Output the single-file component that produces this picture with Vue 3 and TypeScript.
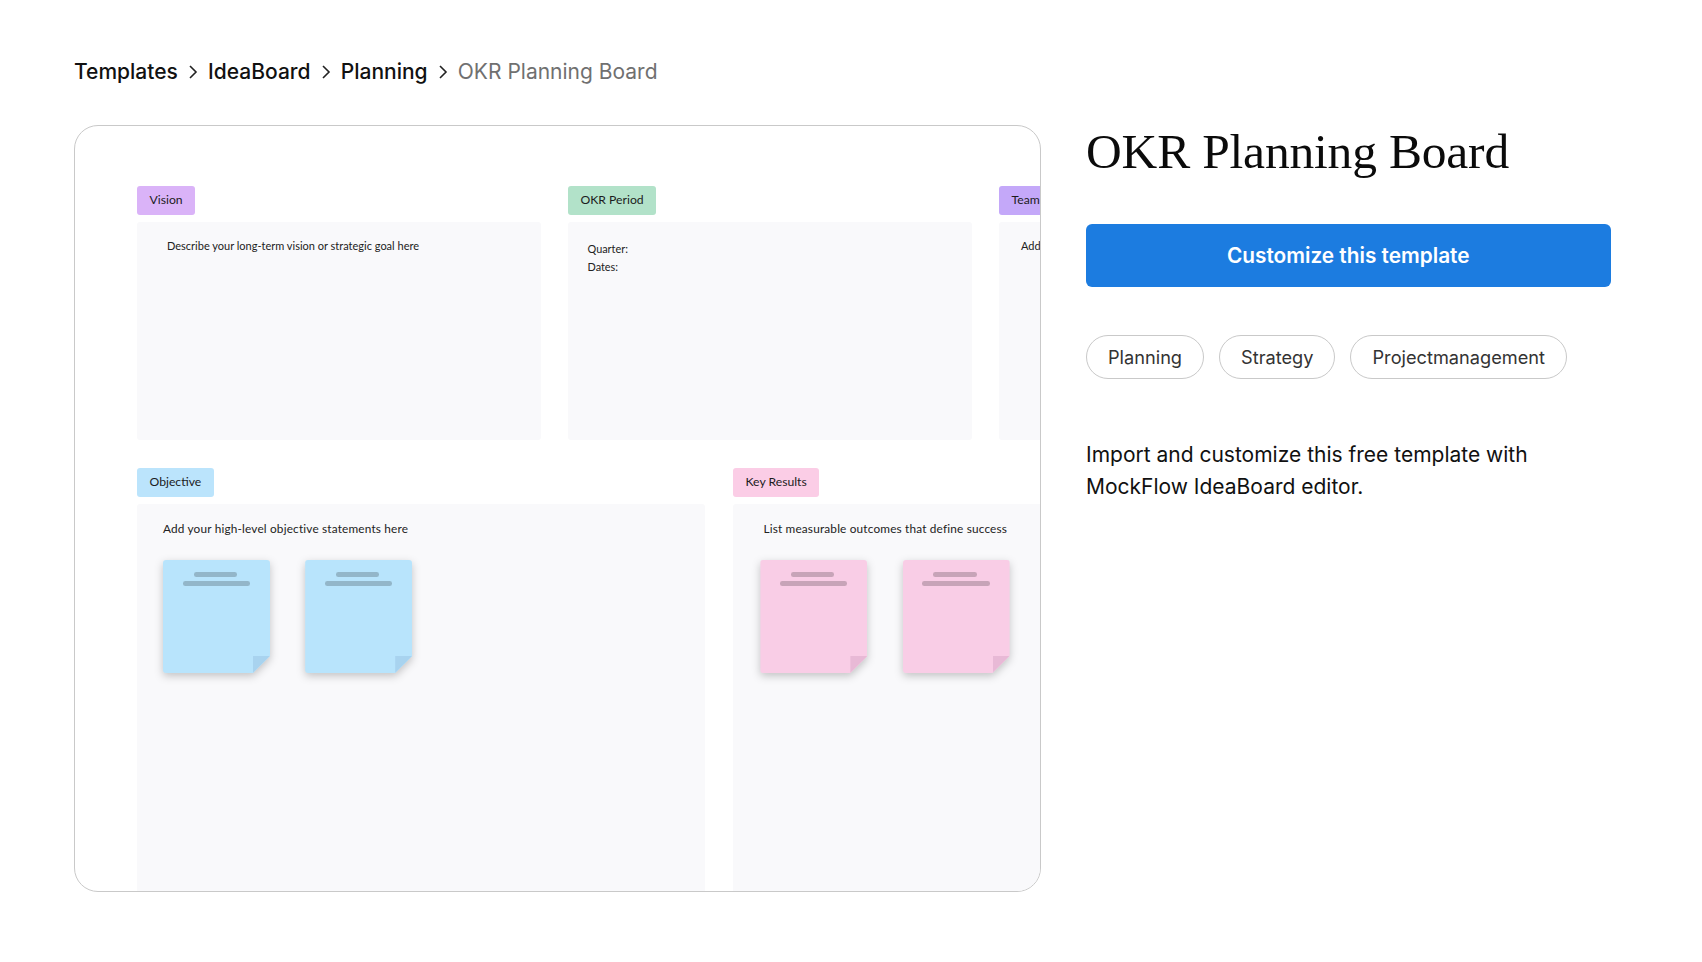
<template>
  <div class="page">
    <nav class="crumbs">
      <template v-for="(c, i) in crumbs" :key="c">
        <span class="crumb" :class="{ current: i === crumbs.length - 1 }">{{ c }}</span>
        <svg v-if="i < crumbs.length - 1" class="chev" viewBox="0 0 10 16" width="10" height="16">
          <path d="M2 2l6 6-6 6" fill="none" stroke="#222" stroke-width="1.6" />
        </svg>
      </template>
    </nav>

    <div class="main">
      <!-- board preview -->
      <div class="preview">
        <div class="board">
          <div class="row top">
            <section v-for="s in topSections" :key="s.label" class="col" :class="s.cls">
              <div class="tag" :style="{ background: s.color }">{{ s.label }}</div>
              <div class="panel">
                <p v-for="t in s.lines" :key="t" class="hint">{{ t }}</p>
              </div>
            </section>
          </div>
          <div class="row bottom">
            <section v-for="s in bottomSections" :key="s.label" class="col" :class="s.cls">
              <div class="tag" :style="{ background: s.color }">{{ s.label }}</div>
              <div class="panel">
                <p class="hint">{{ s.text }}</p>
                <div class="notes">
                  <div v-for="n in 2" :key="n" class="note">
                    <div class="paper">
                      <i class="bar short"></i>
                      <i class="bar long"></i>
                    </div>
                  </div>
                </div>
              </div>
            </section>
          </div>
        </div>
      </div>

      <!-- details -->
      <aside class="side">
        <h1>OKR Planning Board</h1>
        <button class="cta">Customize this template</button>
        <div class="chips">
          <span v-for="c in chips" :key="c" class="chip">{{ c }}</span>
        </div>
        <p class="desc">Import and customize this free template with MockFlow IdeaBoard editor.</p>
      </aside>
    </div>
  </div>
</template>

<script setup lang="ts">
const crumbs = ['Templates', 'IdeaBoard', 'Planning', 'OKR Planning Board']
const chips = ['Planning', 'Strategy', 'Projectmanagement']

const topSections = [
  { label: 'Vision', color: '#dab3f8', cls: 'vision', lines: ['Describe your long-term vision or strategic goal here'] },
  { label: 'OKR Period', color: '#b2e2c9', cls: 'period', lines: ['Quarter:', 'Dates:'] },
  { label: 'Team', color: '#c4a8f9', cls: 'team', lines: ['Add team members'] },
]

const bottomSections = [
  { label: 'Objective', color: '#bbe4fc', cls: 'objective', text: 'Add your high-level objective statements here' },
  { label: 'Key Results', color: '#fbcde6', cls: 'results', text: 'List measurable outcomes that define success' },
]
</script>

<style>
body {
  background: #fff;
}
</style>

<style scoped>
.page {
  padding: 58.5px 0 0 74px;
  font-family: Inter, "Liberation Sans", sans-serif;
  color: #111;
}

.crumbs {
  display: flex;
  align-items: center;
  height: 26px;
  font-size: 21px;
  font-weight: 500;
}

.crumb.current {
  color: #707070;
  font-weight: 400;
}

.chev {
  margin: 0 9.8px 0 10.4px;
}

.main {
  display: flex;
  gap: 45px;
  margin-top: 40.5px;
}

.preview {
  width: 967px;
  height: 767px;
  box-sizing: border-box;
  border: 1px solid #c9c9c9;
  border-radius: 24px;
  overflow: hidden;
  background: #fff;
}

.board {
  padding: 60px 0 0 62px;
  font-family: Lato, "Liberation Sans", sans-serif;
}

.row {
  display: flex;
}

.row.top {
  gap: 27px;
}

.row.bottom {
  gap: 28px;
  margin-top: 28px;
}

.col {
  flex: 0 0 404px;
}

.col.objective {
  flex-basis: 568px;
}

.col.results {
  flex-basis: 400px;
}

.tag {
  display: inline-block;
  height: 29px;
  line-height: 28.5px;
  padding: 0 12.5px;
  border-radius: 3px;
  font-size: 12.2px;
  color: #1c1c1c;
  vertical-align: top;
}

.panel {
  margin-top: 7px;
  background: #f9f9fb;
  border-radius: 3px;
}

.top .panel {
  height: 218px;
  padding: 15px 0 0 30px;
  box-sizing: border-box;
}

.period .panel {
  padding: 18px 0 0 19.5px;
}

.team .panel {
  padding-left: 22px;
}

.bottom .panel {
  height: 400px;
  padding: 16px 0 0 26px;
  box-sizing: border-box;
}

.results .panel {
  padding-left: 27.4px;
}

.hint {
  margin: 0;
  font-size: 11.8px;
  line-height: 17px;
  letter-spacing: 0.18px;
  color: #222;
  white-space: nowrap;
}

.vision .hint,
.team .hint {
  font-size: 11px;
  letter-spacing: 0;
}

.period .hint {
  line-height: 18.4px;
  font-size: 10.9px;
  letter-spacing: 0;
}

.results .hint {
  padding-left: 3px;
}

.notes {
  display: flex;
  gap: 35.2px;
  margin-top: 23px;
}

.note {
  width: 107px;
  height: 113px;
  filter: drop-shadow(0 3px 4px rgba(0, 0, 0, 0.22));
}

.paper {
  position: relative;
  height: 100%;
  padding-top: 12px;
  box-sizing: border-box;
  border-radius: 3px;
  background: #b8e4fc;
  clip-path: polygon(0 0, 100% 0, 100% 96px, 90px 100%, 0 100%);
}

.results .paper {
  background: #f9cde6;
}

.paper::after {
  content: '';
  position: absolute;
  right: 0;
  bottom: 0;
  width: 17px;
  height: 17px;
  background: #a8d3ef;
  clip-path: polygon(0 0, 100% 0, 0 100%);
}

.results .paper::after {
  background: #e8b9d6;
}

.bar {
  display: block;
  height: 4.6px;
  border-radius: 2.3px;
  background: rgba(0, 0, 0, 0.2);
}

.bar.short {
  width: 43.5px;
  margin-left: 30.5px;
}

.bar.long {
  width: 67.5px;
  margin: 4.8px 0 0 19.5px;
}

.side {
  flex: 0 0 524.5px;
  width: 524.5px;
}

h1 {
  margin: 0;
  font-family: "Liberation Serif", serif;
  font-size: 49.5px;
  font-weight: 400;
  line-height: 54px;
  letter-spacing: -0.18px;
  color: #0b0b0b;
}

.cta {
  display: block;
  width: 100%;
  height: 63px;
  margin-top: 45px;
  border: none;
  border-radius: 6px;
  background: #1c7ce0;
  color: #fff;
  font-family: inherit;
  font-size: 20.8px;
  font-weight: 600;
}

.chips {
  display: flex;
  gap: 15px;
  margin-top: 48px;
}

.chip {
  height: 44px;
  line-height: 42px;
  box-sizing: border-box;
  padding: 0 21px;
  border: 1px solid #c9c9c9;
  border-radius: 22px;
  font-size: 18.2px;
  color: #333;
}

.desc {
  margin: 60px 0 0;
  font-size: 21px;
  line-height: 32px;
  color: #111;
}
</style>
